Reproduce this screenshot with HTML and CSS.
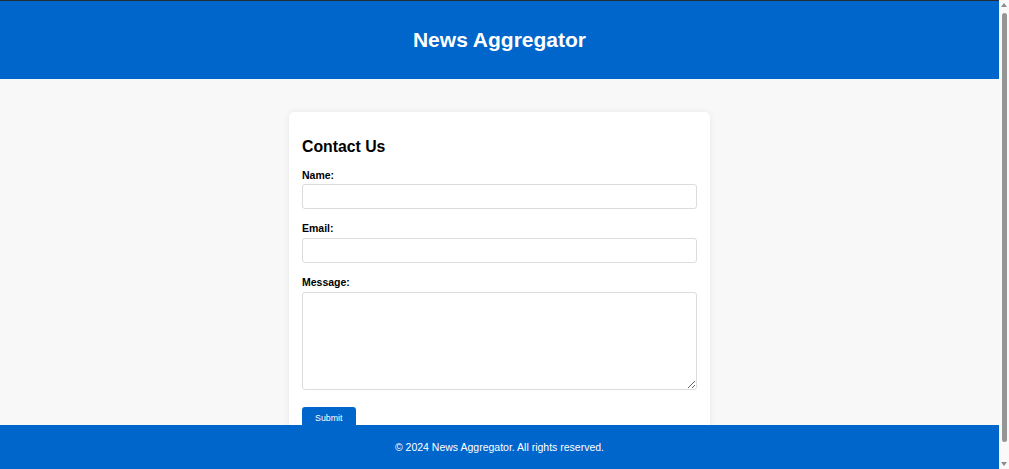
FILE: index.html
```html
<!DOCTYPE html>
<html lang="en">
<head>
<meta charset="utf-8">
<title>Contact Us - News Aggregator</title>
<link rel="stylesheet" href="styles.css">
</head>
<body>
<header class="site-header">
  <h1 class="site-title">News Aggregator</h1>
</header>
<main class="page">
  <section class="card">
    <h2 class="card-title">Contact Us</h2>
    <form class="contact-form">
      <label class="field-label" for="name">Name:</label>
      <input class="field-input" type="text" id="name" name="name">
      <label class="field-label" for="email">Email:</label>
      <input class="field-input" type="email" id="email" name="email">
      <label class="field-label" for="message">Message:</label>
      <textarea class="field-input field-textarea" id="message" name="message"></textarea>
      <button class="submit-btn" type="submit">Submit</button>
    </form>
  </section>
</main>
<footer class="site-footer">
  <p class="footer-text">&copy; 2024 News Aggregator. All rights reserved.</p>
</footer>
<div class="scrollbar" aria-hidden="true">
  <div class="sb-button"><span class="sb-arrow sb-arrow-up"></span></div>
  <div class="sb-thumb"></div>
  <div class="sb-spacer"></div>
  <div class="sb-button"><span class="sb-arrow sb-arrow-down"></span></div>
</div>
</body>
</html>
```
FILE: styles.css
```css
html, body {
  margin: 0;
  padding: 0;
}

body {
  background: #f8f8f8;
  font-family: "Liberation Sans", Arial, sans-serif;
  color: #000;
  margin-right: 10px;
}

.site-header {
  box-sizing: border-box;
  height: 79px;
  background: #0066cc;
  border-top: 1px solid #232b36;
  color: #fff;
  display: flex;
  align-items: center;
  justify-content: center;
}

.site-title {
  margin: 0;
  font-size: 21px;
  font-weight: bold;
}

.page {
  display: flex;
  justify-content: center;
  padding: 33px 0 49px;
}

.card {
  box-sizing: border-box;
  width: 421px;
  background: #fff;
  padding: 13px;
  border-radius: 5px;
  box-shadow: 0 0 7px rgba(0, 0, 0, 0.07);
}

.card-title {
  margin: 13px 0;
  font-size: 15.8px;
  font-weight: bold;
}

.contact-form {
  display: flex;
  flex-direction: column;
  align-items: flex-start;
}

.field-label {
  display: block;
  font-size: 10.5px;
  font-weight: bold;
  margin-bottom: 3.3px;
}

.field-input {
  display: block;
  box-sizing: border-box;
  width: 100%;
  height: 25px;
  margin: 0 0 13px;
  border: 1px solid #dcdcdc;
  border-radius: 3px;
  background: #fff;
  font-family: inherit;
  font-size: 10.5px;
  padding: 4px 6px;
}

.field-textarea {
  height: 98px;
  margin-top: 1px;
  resize: vertical;
  margin-bottom: 17px;
}

.submit-btn {
  background: #0066cc;
  color: #fff;
  border: none;
  border-radius: 3px;
  padding: 6.6px 13.1px;
  font-family: inherit;
  font-size: 8.8px;
  line-height: 1.15;
  cursor: pointer;
}

.site-footer {
  position: fixed;
  left: 0;
  right: 10px;
  bottom: 0;
  height: 44px;
  background: #0066cc;
  color: #fff;
  display: flex;
  align-items: center;
  justify-content: center;
}

.footer-text {
  margin: 0;
  font-size: 10.5px;
}

/* drawn page scrollbar */
.scrollbar {
  position: fixed;
  top: 0;
  right: 0;
  bottom: 0;
  width: 10px;
  background: #f9f9f9;
  display: flex;
  flex-direction: column;
}

.sb-button {
  height: 10px;
  flex: none;
  display: flex;
  align-items: center;
  justify-content: center;
}

.sb-arrow {
  width: 0;
  height: 0;
  border-left: 3.5px solid transparent;
  border-right: 3.5px solid transparent;
}

.sb-arrow-up {
  border-bottom: 4px solid #8c8c8c;
}

.sb-arrow-down {
  border-top: 4px solid #8c8c8c;
}

.sb-thumb {
  flex: none;
  height: 429px;
  margin: 3px 2.5px 0;
  background: #959595;
  border-radius: 3px;
}

.sb-spacer {
  flex: 1;
}
```
